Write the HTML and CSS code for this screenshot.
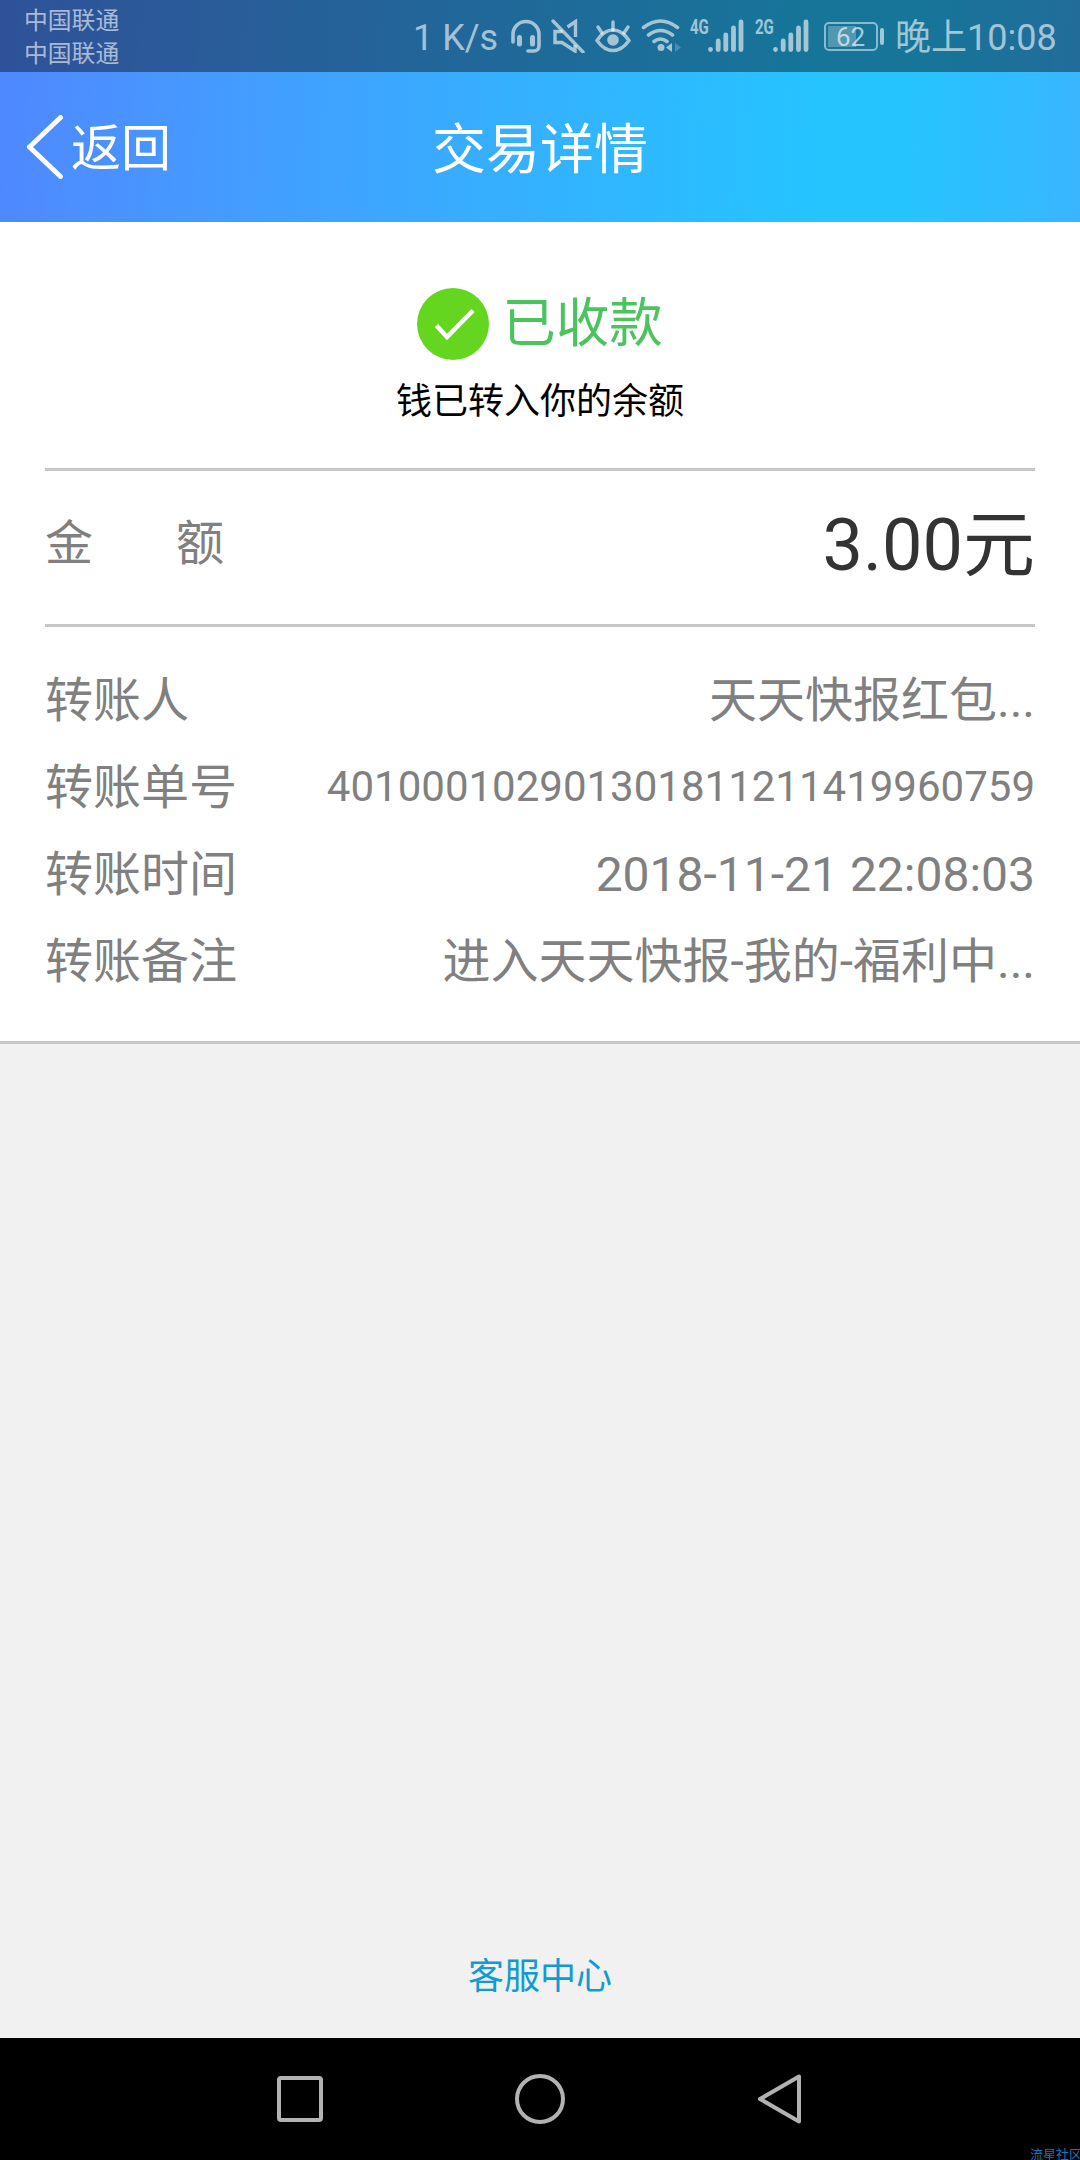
FILE: index.html
```
<!DOCTYPE html>
<html lang="zh-CN">
<head>
  <meta charset="UTF-8">
  <meta name="viewport" content="width=device-width, initial-scale=1.0">
  <title>交易详情</title>
  <link rel="stylesheet" href="styles.css">
</head>
<body>
  <div class="top">
    <div class="status-bar">
      <div class="carriers">
        <div>中国联通</div>
        <div>中国联通</div>
      </div>
      <div class="speed">1 K/s</div>
      <svg class="icon headset" viewBox="0 0 30 34" width="30" height="34">
        <path d="M2 23V15.500a13 13 0 0 1 26 0V27a5 5 0 0 1-5 5h-6" fill="none" stroke="currentColor" stroke-width="3.600" stroke-linecap="round"/>
        <path d="M8.500 18.500v6.500M21.500 18.500v6.500" stroke="currentColor" stroke-width="5" stroke-linecap="round"/>
      </svg>
      <svg class="icon mute" viewBox="0 0 34 34" width="34" height="34">
        <path d="M11.500 12.500H4v11h7L24 32v-6M24.500 18V2.500L16.500 8" fill="none" stroke="currentColor" stroke-width="3.400"/>
        <path d="M2 2l30 31" stroke="currentColor" stroke-width="3.400" stroke-linecap="round"/>
      </svg>
      <svg class="icon eye" viewBox="0 0 36 34" width="36" height="34">
        <path d="M2 21.500Q9 11 18 11t16 10.500Q27 31.500 18 31.500T2 21.500z" fill="none" stroke="currentColor" stroke-width="3.400"/>
        <circle cx="18" cy="21" r="5.800" fill="currentColor"/>
        <path d="M18 3v8M3 8l4 6M33 8l-4 6" stroke="currentColor" stroke-width="3.400" stroke-linecap="round"/>
      </svg>
      <svg class="icon wifi" viewBox="0 0 40 34" width="40" height="34">
        <path d="M2.500 8.500q17-13 34 0M7.500 16q12-9 24 0M13 22.500q6.500-5 13 0" fill="none" stroke="currentColor" stroke-width="3.600" stroke-linecap="round"/>
        <circle cx="20" cy="28.500" r="3.500" fill="currentColor"/>
        <path d="M31 24v9l-6-4.500z" fill="currentColor"/>
        <path d="M34 24v9l6-4.500z" fill="currentColor" opacity=".35"/>
      </svg>
      <div class="net">4G</div>
      <svg class="icon bars" viewBox="0 0 36 34" width="36" height="34">
        <path d="M2.500 30.500v0.010M10.200 22v8.500M17.800 16v14.500M25.500 9v21.500M33 3v27.500" stroke="currentColor" stroke-width="4.800" stroke-linecap="round"/>
      </svg>
      <div class="net second">2G</div>
      <svg class="icon bars" viewBox="0 0 36 34" width="36" height="34">
        <path d="M2.500 30.500v0.010M10.200 22v8.500M17.800 16v14.500M25.500 9v21.500M33 3v27.500" stroke="currentColor" stroke-width="4.800" stroke-linecap="round"/>
      </svg>
      <div class="battery"><span class="level">62</span></div>
      <div class="nub"></div>
      <div class="time">晚上10:08</div>
    </div>
    <div class="header">
      <a class="back" href="#">
        <svg viewBox="0 0 36 64" width="36" height="64">
          <path d="M33.500 2.500L2.500 32l31 29.500" fill="none" stroke="currentColor" stroke-width="4.800" stroke-linecap="round"/>
        </svg>
        <span>返回</span>
      </a>
      <h1>交易详情</h1>
    </div>
  </div>

  <div class="detail">
    <div class="result">
      <svg viewBox="0 0 72 72" width="72" height="72">
        <circle cx="36" cy="36" r="36" fill="#64d620"/>
        <path d="M19.500 37.500L30 49l26-26.500" fill="none" stroke="#fff" stroke-width="4.600"/>
      </svg>
      <span>已收款</span>
    </div>
    <div class="tip">钱已转入你的余额</div>
    <div class="amount">
      <div class="amount-label"><span>金</span><span>额</span></div>
      <div class="amount-value">3.00元</div>
    </div>
    <div class="info">
      <div class="row"><span>转账人</span><span>天天快报红包...</span></div>
      <div class="row"><span>转账单号</span><span class="number">401000102901301811211419960759</span></div>
      <div class="row"><span>转账时间</span><span>2018-11-21 22:08:03</span></div>
      <div class="row"><span>转账备注</span><span>进入天天快报-我的-福利中...</span></div>
    </div>
  </div>

  <a class="service" href="#">客服中心</a>

  <div class="nav">
    <svg viewBox="0 0 50 50" width="50" height="50"><rect x="4" y="4" width="42" height="42" rx="2"/></svg>
    <svg viewBox="0 0 50 50" width="50" height="50"><circle cx="25" cy="25" r="23"/></svg>
    <svg viewBox="0 0 50 50" width="50" height="50"><path d="M44 2.500v45L5 25z"/></svg>
    <div class="watermark">流星社区</div>
  </div>
</body>
</html>
```

FILE: styles.css
```
* { box-sizing: border-box; }
body {
  margin: 0; width: 1080px; height: 2160px; display: flex; flex-direction: column;
  background: #f1f1f1; overflow: hidden;
  font-family: Roboto, "Noto Sans CJK SC", sans-serif;
}
svg { display: block; flex: none; }
a { text-decoration: none; }

.top { background: linear-gradient(92deg, #4f88ff 0%, #459aff 20%, #3ba8ff 37%, #25c4ff 76%, #26c4ff 84%, #39b5ff 100%); color: white; }
.status-bar {
  height: 72px; display: flex; align-items: flex-start; padding-left: 24px;
  background: rgba(0,0,0,0.4); color: rgba(255,255,255,0.6); white-space: nowrap;
}
.carriers { width: 389px; padding-top: 5px; font-size: 23.8px; line-height: 33px; }
.speed { width: 98px; font-size: 36px; line-height: 76px; }
.icon { margin-top: 19px; }
.mute { margin-left: 10px; }
.eye { margin-left: 10px; }
.wifi { margin-left: 10px; }
.net {
  width: 18px; margin: 16px 0 0 9px; font-size: 20px; line-height: 22px; font-weight: 700;
  transform: scaleX(0.75); transform-origin: left;
}
.second { margin-left: 11px; }
.battery {
  width: 54px; height: 29px; margin: 22px 0 0 15px; padding: 2px;
  border: 2px solid rgba(255,255,255,0.5); border-radius: 5px;
}
.level {
  display: block; width: 28px; height: 21px; padding-left: 8px; background: rgba(255,255,255,0.25);
  font-size: 26px; line-height: 22px; color: rgba(255,255,255,0.65);
}
.nub { width: 4px; height: 17px; margin: 28px 11px 0 2px; border-radius: 2px; background: rgba(255,255,255,0.6); }
.time { font-size: 36px; line-height: 76px; }

.header { height: 150px; display: grid; grid-template-columns: 1fr auto 1fr; align-items: center; }
.back { display: flex; align-items: center; gap: 8px; padding-left: 27px; color: white; font-size: 50px; line-height: 60px; }
.back span { padding-top: 4px; }
h1 { margin: 0; padding-top: 8px; font-size: 54px; line-height: 70px; font-weight: 400; }

.detail { height: 822px; background: white; border-bottom: 3px solid #c7c7c7; padding: 66px 45px 0; }
.result { height: 72px; display: flex; justify-content: center; align-items: center; gap: 13px; color: #4bc35f; font-size: 53.5px; line-height: 66px; }
.tip { margin-top: 16px; height: 52px; text-align: center; color: black; font-size: 36px; line-height: 52px; }
.amount {
  margin-top: 40px; height: 159px; display: flex; justify-content: space-between; align-items: center;
  padding-bottom: 17px; border-top: 3px solid #c7c7c7; border-bottom: 3px solid #c7c7c7;
}
.amount-label { display: flex; gap: 83px; color: #808080; font-size: 48px; }
.amount-value { padding-bottom: 2px; color: #333; font-size: 72px; }
.info { padding-top: 30px; color: #808080; font-size: 48px; }
.row { height: 87px; display: flex; justify-content: space-between; align-items: center; line-height: 87px; }
.number { padding-bottom: 2px; font-size: 42px; line-height: 83px; }

.service { margin-top: auto; height: 124px; text-align: center; color: #129bd2; font-size: 36px; line-height: 126px; }

.nav {
  position: relative; height: 122px; flex: none; display: flex; justify-content: center; gap: 190px;
  padding-top: 36px; background: black;
}
.nav svg { fill: none; stroke: #b2b2b2; stroke-width: 4; stroke-linejoin: round; }
.watermark { position: absolute; right: -2px; bottom: -4px; color: #1974b8; font-size: 13px; line-height: 18px; }
```
